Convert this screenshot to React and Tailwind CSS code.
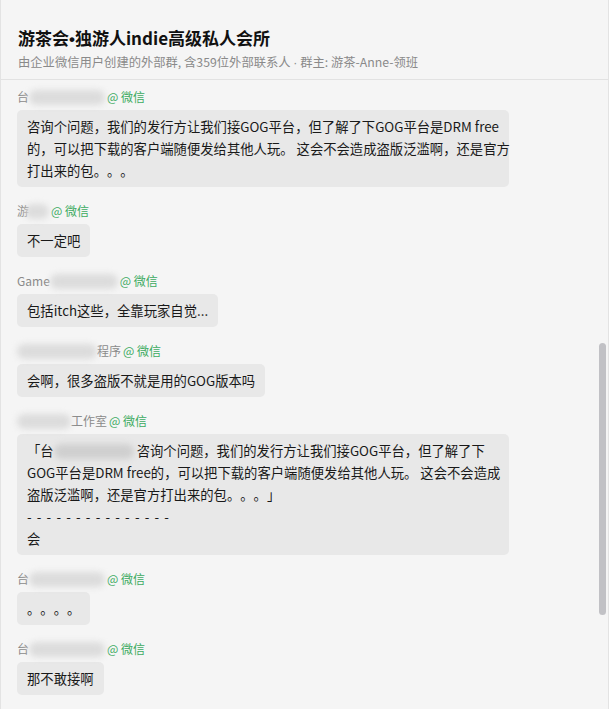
const font = { fontFamily: '"Noto Sans CJK SC", "Noto Sans", sans-serif' };

function Blur({ className }) {
  return <span className={`inline-block h-[15px] rounded-full blur-[3px] align-middle ${className}`} />;
}

function Dot({ children }) {
  return <span className="font-['Liberation_Sans',sans-serif] leading-none">{children}</span>;
}

function WeChat() {
  return <span className="ml-[2px] text-[#3dab62]">@ 微信</span>;
}

function Name({ children }) {
  return (
    <div className="flex h-4 items-center whitespace-nowrap text-[12px] leading-4 text-[#8a8a8a]">
      {children}
      <WeChat />
    </div>
  );
}

function Bubble({ lines, wide = false }) {
  return (
    <div
      className={`mt-[5px] rounded-[5px] bg-[#e8e8e8] px-[10px] py-[5.5px] text-[13.33px] leading-[22px] text-[#191919] [text-spacing-trim:space-all] ${
        wide ? 'w-[492px]' : 'self-start'
      }`}
    >
      {lines.map((line, i) => (
        <div key={i} className="whitespace-nowrap">
          {line}
        </div>
      ))}
    </div>
  );
}

const messages = [
  {
    name: (
      <>
        <span>台</span>
        <Blur className="w-[76px] bg-[#dcdcdc]" />
      </>
    ),
    wide: true,
    lines: [
      '咨询个问题，我们的发行方让我们接GOG平台，但了解了下GOG平台是DRM free',
      '的，可以把下载的客户端随便发给其他人玩。 这会不会造成盗版泛滥啊，还是官方',
      '打出来的包。。。',
    ],
  },
  {
    name: (
      <>
        <span>游</span>
        <Blur className="-ml-[4px] w-[24px] bg-[#dcdcdc]" />
      </>
    ),
    lines: ['不一定吧'],
  },
  {
    name: (
      <>
        <span>Game</span>
        <Blur className="w-[68px] bg-[#dcdcdc]" />
      </>
    ),
    lines: ['包括itch这些，全靠玩家自觉...'],
  },
  {
    name: (
      <>
        <Blur className="w-[80px] bg-[#dcdcdc]" />
        <span>程序</span>
      </>
    ),
    lines: ['会啊，很多盗版不就是用的GOG版本吗'],
  },
  {
    name: (
      <>
        <Blur className="w-[54px] bg-[#dcdcdc]" />
        <span>工作室</span>
      </>
    ),
    wide: true,
    lines: [
      <>
        「台
        <Blur className="w-[80px] bg-[#cfcfcf]" /> 咨询个问题，我们的发行方让我们接GOG平台，但了解了下
      </>,
      'GOG平台是DRM free的，可以把下载的客户端随便发给其他人玩。 这会不会造成',
      '盗版泛滥啊，还是官方打出来的包。。。」',
      <span className="tracking-[1.1px]">- - - - - - - - - - - - - - -</span>,
      '会',
    ],
  },
  {
    name: (
      <>
        <span>台</span>
        <Blur className="w-[76px] bg-[#dcdcdc]" />
      </>
    ),
    lines: ['。。。。'],
  },
  {
    name: (
      <>
        <span>台</span>
        <Blur className="w-[76px] bg-[#dcdcdc]" />
      </>
    ),
    lines: ['那不敢接啊'],
  },
];

export default function App() {
  return (
    <div
      className="relative h-[709px] w-[609px] overflow-hidden border-x border-[#e3e3e3] bg-[#f5f5f5]"
      style={font}
    >
      <div className="border-b border-[#e2e2e2] px-[17px] pb-[8px] pt-[26px]">
        <div className="h-6 text-[17px] font-bold leading-6 text-[#111]">
          游茶会<Dot>•</Dot>独游人indie高级私人会所
        </div>
        <div className="mt-[3px] h-[18px] text-[12.3px] leading-[18px] text-[#8a8a8a]">
          由企业微信用户创建的外部群, 含359位外部联系人 <Dot>·</Dot> 群主: 游茶-Anne-领班
        </div>
      </div>

      <div className="flex flex-col gap-[16px] px-[16px] pt-[9px]">
        {messages.map((m, i) => (
          <div key={i} className="flex flex-col">
            <Name>{m.name}</Name>
            <Bubble lines={m.lines} wide={m.wide} />
          </div>
        ))}
      </div>

      <div className="absolute left-[598px] top-[343px] h-[272px] w-[7px] rounded-full bg-[#c1c1c5]" />
    </div>
  );
}
